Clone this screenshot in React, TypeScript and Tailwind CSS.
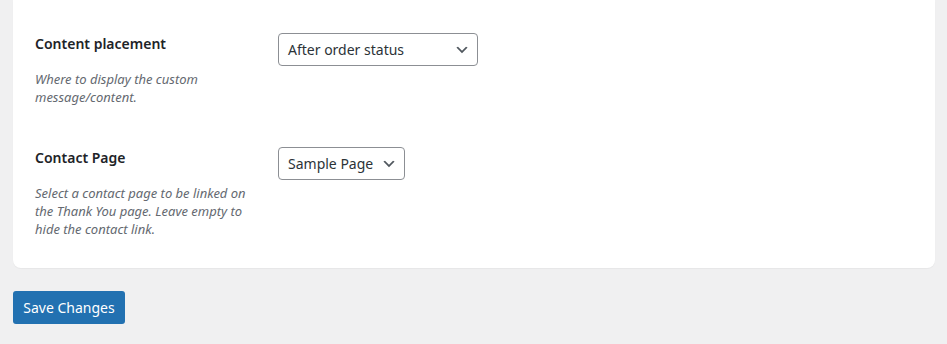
import React from "react";

function Chevron() {
  return (
    <svg width="16" height="16" viewBox="0 0 20 20" className="shrink-0">
      <path d="M5 6l5 5 5-5 2 1-7 7-7-7 2-1z" fill="#50575e" />
    </svg>
  );
}

function Select({ value, width }: { value: string; width?: string }) {
  return (
    <div
      className={`flex h-[33px] items-center justify-between rounded-[4px] border border-[#8c8f94] bg-white pl-[9px] pr-[7px] text-[14px] text-[#2c3338] ${width ?? ""}`}
    >
      <span className="whitespace-nowrap">{value}</span>
      <span className="ml-[8px] flex items-center">
        <Chevron />
      </span>
    </div>
  );
}

function Row({
  label,
  desc,
  children,
}: {
  label: string;
  desc: string[];
  children: React.ReactNode;
}) {
  return (
    <div className="flex items-start">
      <div className="w-[243px] shrink-0">
        <div className="pt-[1px] text-[14px] font-semibold leading-[20px] text-[#1d2327]">
          {label}
        </div>
        <div className="mt-[16px] text-[13px] italic leading-[18px] text-[#646970]">
          {desc.map((d, i) => (
            <div key={i}>{d}</div>
          ))}
        </div>
      </div>
      {children}
    </div>
  );
}

export default function App() {
  return (
    <div
      className="min-h-[344px] bg-[#f0f0f1] pl-[13px] pr-[12px]"
      style={{ fontFamily: '"Noto Sans", "Open Sans", sans-serif' }}
    >
      <div className="rounded-b-[8px] bg-white pl-[22px] pt-[33px] pb-[30px] shadow-[0_1px_1px_rgba(0,0,0,0.04)]">
        <Row
          label="Content placement"
          desc={["Where to display the custom", "message/content."]}
        >
          <Select value="After order status" width="w-[200px]" />
        </Row>
        <div className="h-[41px]" />
        <Row
          label="Contact Page"
          desc={[
            "Select a contact page to be linked on",
            "the Thank You page. Leave empty to",
            "hide the contact link.",
          ]}
        >
          <Select value="Sample Page" />
        </Row>
      </div>
      <div className="pt-[23px]">
        <button className="h-[33px] w-[112px] rounded-[3px] bg-[#2271b1] text-[14px] text-white">
          Save Changes
        </button>
      </div>
    </div>
  );
}
